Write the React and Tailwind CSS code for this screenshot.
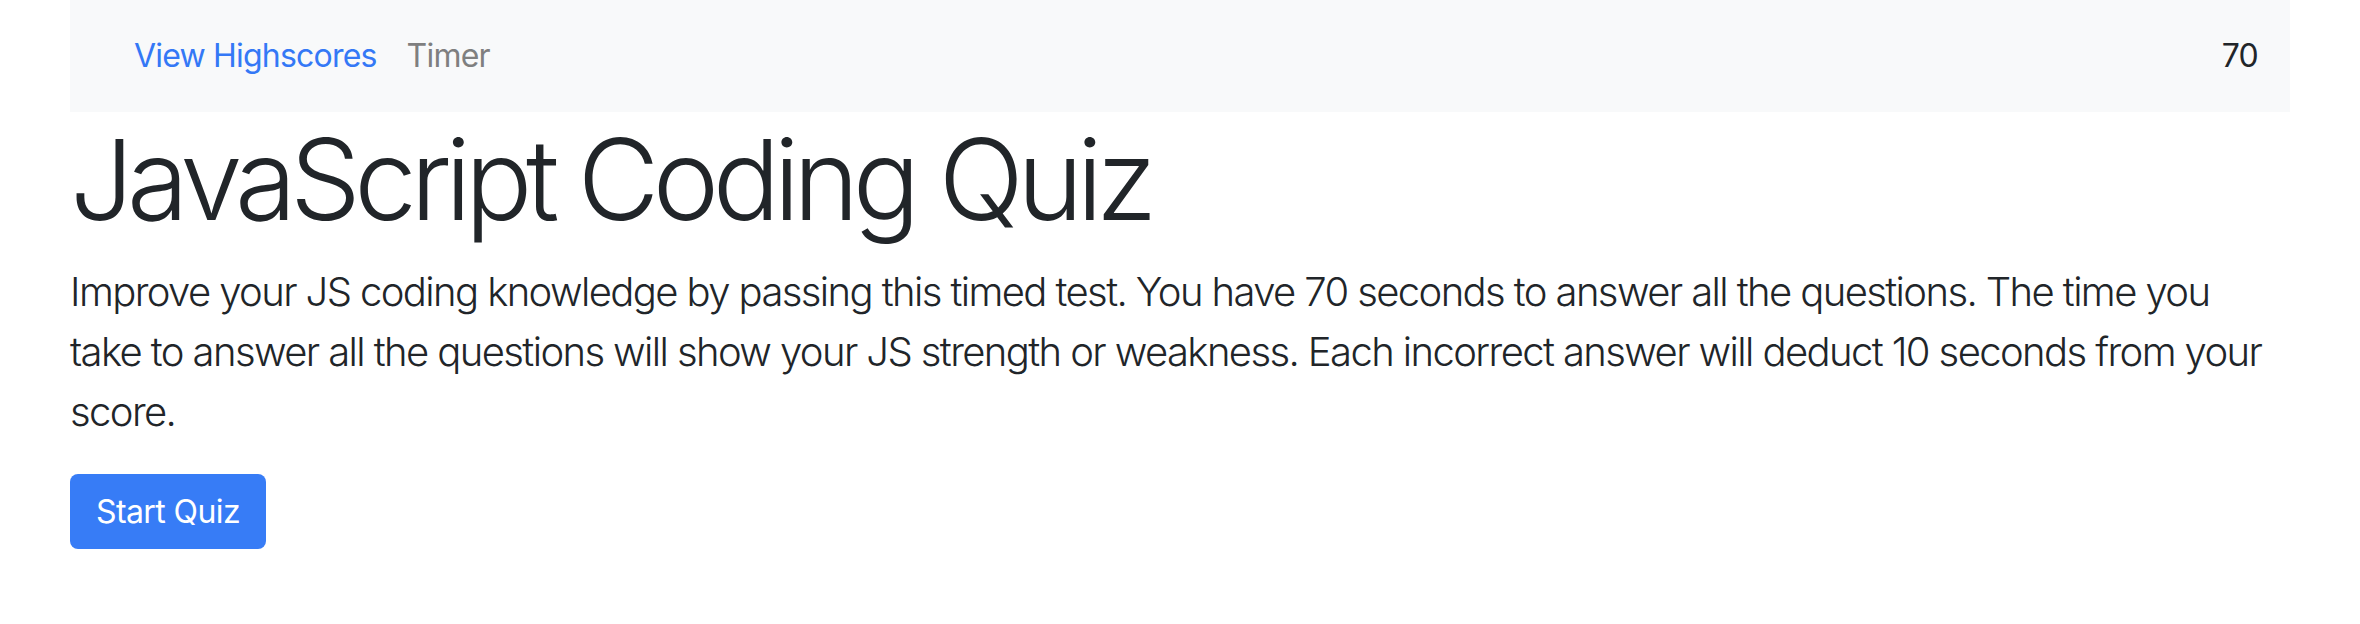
export default function App() {
  return (
    <div className="min-h-[624px] bg-white px-[70px] font-['Inter','Liberation_Sans',sans-serif] text-[#212529]">
      <nav className="flex h-[112px] items-center justify-between bg-[#f8f9fa] pl-[64px] pr-[32px] text-[32px] leading-[48px] tracking-[-0.8px]">
        <div className="flex items-center gap-[30px]">
          <a href="#" className="text-[#3478f6]">View Highscores</a>
          <span className="text-[#7f7f7f]">Timer</span>
        </div>
        <span>70</span>
      </nav>

      <h1 className="mb-[16px] text-[112px] font-light leading-[1.2] tracking-[-6.5px]">JavaScript Coding Quiz</h1>

      <p className="mb-[32px] text-[40px] font-light leading-[60px] tracking-[-1.6px]">
        Improve your JS coding knowledge by passing this timed test. You have 70 seconds to answer all the
        questions. The time you take to answer all the questions will show your JS strength or weakness. Each
        incorrect answer will deduct 10 seconds from your score.
      </p>

      <button className="h-[75px] rounded-[8px] bg-[#377cf6] px-[26px] text-[32px] leading-[48px] tracking-[-0.6px] text-white">
        Start Quiz
      </button>
    </div>
  );
}
